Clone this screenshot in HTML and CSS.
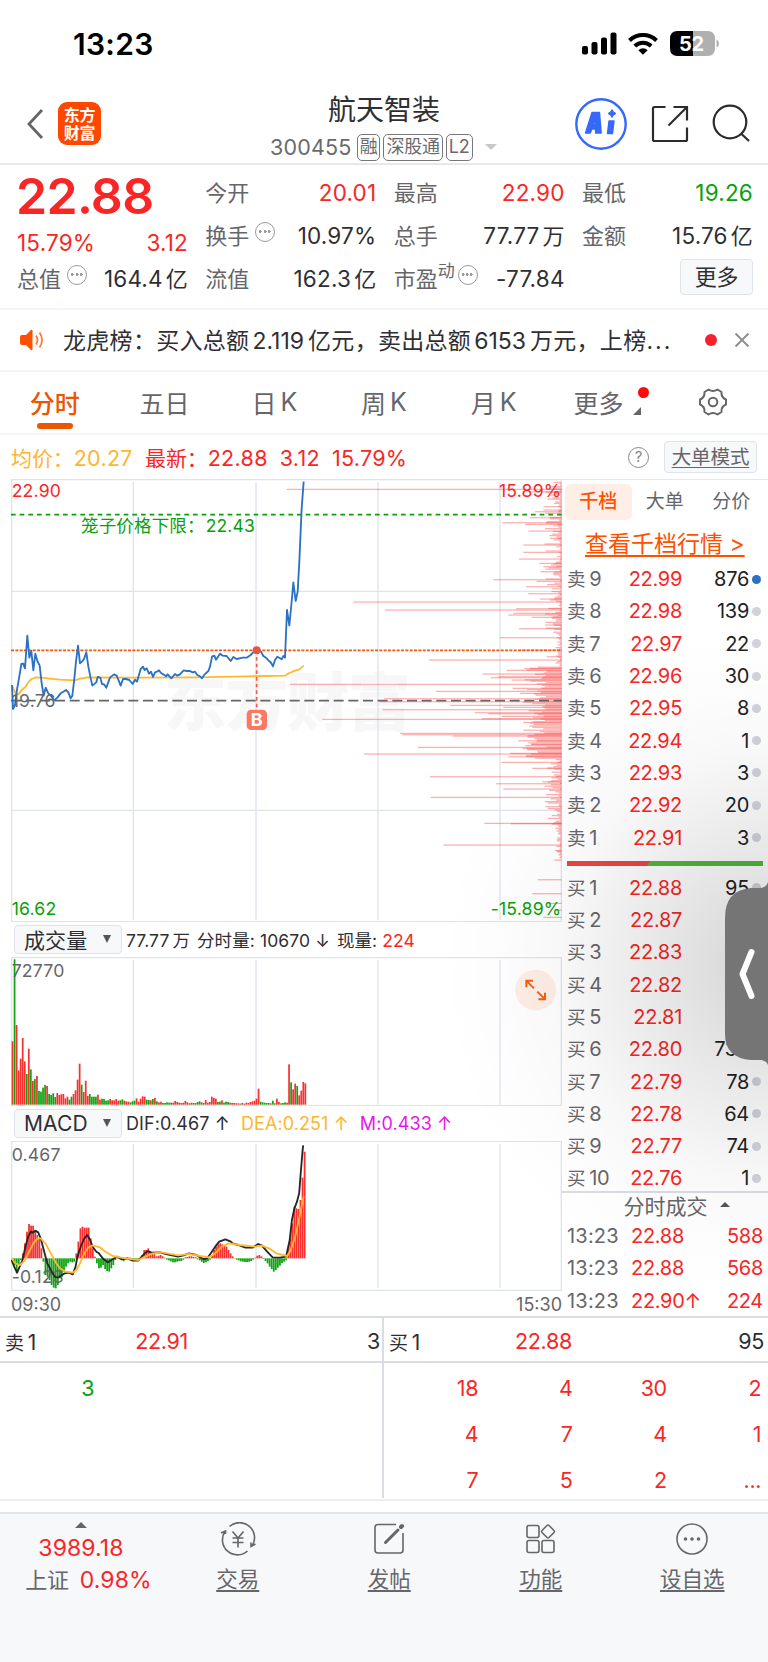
FILE: index.html
```html
<!DOCTYPE html>
<html lang="zh-CN">
<head>
    <meta charset="UTF-8">
    <meta name="viewport" content="width=device-width, initial-scale=1.0">
    <title>航天智装 300455</title>
    <link rel="stylesheet" href="styles.css">
</head>
<body>
    <div class="status-bar">
        <span class="clock">13:23</span>
        <svg class="status-icons" width="140" height="30" viewBox="580 29 140 30">
            <rect x="582" y="46" width="6" height="8.500" rx="2"/>
            <rect x="591.500" y="42" width="6" height="12.500" rx="2"/>
            <rect x="601" y="37.500" width="6" height="17" rx="2"/>
            <rect x="610.500" y="32.500" width="6" height="22" rx="2"/>
            <path d="M629.500 40.500a19.500 19.500 0 0 1 27 0" fill="none" stroke="#000" stroke-width="4"/>
            <path d="M634.800 46a12 12 0 0 1 16.400 0" fill="none" stroke="#000" stroke-width="4"/>
            <path d="M638.300 50.200q4.700-3.800 9.400 0l-4.700 4.600z"/>
            <path d="M677.500 31H693v25h-15.500q-7.500 0-7.500-8v-9q0-8 7.500-8z"/>
            <path d="M693 31h14.500q7.500 0 7.500 8v9q0 8-7.500 8H693z" fill="#b0b0b0"/>
            <path d="M716.500 39.500q2.500 1 2.500 4t-2.500 4z" fill="#b0b0b0"/>
            <text x="679" y="51" class="battery">52</text>
        </svg>
    </div>

    <header class="header">
        <div class="header-left">
            <svg width="18" height="32" viewBox="0 0 18 32" fill="none" stroke="#666" stroke-width="2.800"><path d="M16 2L3 16l13 14"/></svg>
            <div class="logo">东方<br>财富</div>
        </div>
        <div class="header-title">
            <h1>航天智装</h1>
            <div class="code">300455<span class="tag">融</span><span class="tag">深股通</span><span class="tag">L2</span><i class="down"></i></div>
        </div>
        <div class="header-icons">
            <svg width="52" height="52" viewBox="0 0 52 52">
                <circle cx="26" cy="26" r="24.700" fill="none" stroke="#3568fb" stroke-width="2.400"/>
                <path fill="#3568fb" stroke="#3568fb" stroke-width="1.400" stroke-linejoin="round" fill-rule="evenodd" d="M17 14.500h7.500l1.700 20.500h-5.500l-.2-4h-3.700l-1.500 4H10.500zM20.500 20.500l-2 6h2.300zM34 23h5l-1.500 12.500h-5z"/>
                <path fill="#3568fb" d="M37 11.500q1 3 4 4-3 1-4 4-1-3-4-4 3-1 4-4z" stroke="#3568fb" stroke-width="1"/>
            </svg>
            <svg width="38" height="38" viewBox="0 0 38 38" fill="none" stroke="#2c2c2e" stroke-width="2.200">
                <path d="M14.500 2H3.500Q2 2 2 3.500v31q0 1.500 1.500 1.500h31q1.500 0 1.500-1.500V22.500M22.500 2H36V15.500M36 2L17.500 20.500"/>
            </svg>
            <svg width="40" height="40" viewBox="0 0 40 40" fill="none" stroke="#2c2c2e" stroke-width="2.200">
                <circle cx="19" cy="18" r="16.300"/><path d="M30.500 30l7.500 7"/>
            </svg>
        </div>
    </header>

    <section class="summary">
        <div class="summary-col">
            <div class="big-price">22.88</div>
            <div class="pair change red"><b>15.79%</b><b>3.12</b></div>
            <div class="pair"><span>总值<i class="more-dot"></i></span><b>164.4<u>亿</u></b></div>
        </div>
        <div class="summary-col">
            <div class="pair"><span>今开</span><b class="red">20.01</b></div>
            <div class="pair"><span>换手<i class="more-dot"></i></span><b>10.97%</b></div>
            <div class="pair"><span>流值</span><b>162.3<u>亿</u></b></div>
        </div>
        <div class="summary-col">
            <div class="pair"><span>最高</span><b class="red">22.90</b></div>
            <div class="pair"><span>总手</span><b>77.77<u>万</u></b></div>
            <div class="pair"><span>市盈<sup>动</sup><i class="more-dot near"></i></span><b>-77.84</b></div>
        </div>
        <div class="summary-col">
            <div class="pair"><span>最低</span><b class="green">19.26</b></div>
            <div class="pair"><span>金额</span><b>15.76<u>亿</u></b></div>
            <div class="pair end"><button class="more-btn">更多</button></div>
        </div>
    </section>

    <div class="news">
        <svg width="26" height="28" viewBox="0 0 26 28" fill="#ff5000">
            <path d="M1 11q0-2 2-2h4l5-5q1.500-1 1.500 1v18q0 2-1.500 1l-5-5H3q-2 0-2-2z"/>
            <path d="M17 9.500q3 4.500 0 9M20.500 6.500q5 7.500 0 15" fill="none" stroke="#ff7a3c" stroke-width="1.800"/>
        </svg>
        <p>龙虎榜：买入总额<em>2.119</em>亿元，卖出总额<em>6153</em>万元，上榜<em>...</em></p>
        <i class="red-dot"></i>
        <svg width="16" height="16" viewBox="0 0 16 16" stroke="#8c8c8c" stroke-width="1.800"><path d="M1.500 1.500l13 13M14.500 1.500l-13 13"/></svg>
    </div>

    <nav class="tabs">
        <span class="active">分时</span>
        <span>五日</span>
        <span>日<em>K</em></span>
        <span>周<em>K</em></span>
        <span>月<em>K</em></span>
        <span class="tab-more">更多<i class="corner"></i><i class="badge"></i></span>
        <span>
            <svg width="30" height="30" viewBox="0 0 30 30" fill="none" stroke="#666" stroke-width="2">
                <path stroke-linejoin="round" d="M10.500 2.500Q15 5.500 19.500 2.500L23.500 5Q23 10.500 28 12.500V17.500Q23 19.500 23.500 25L19.500 27.500Q15 24.500 10.500 27.500L6.500 25Q7 19.500 2 17.500V12.500Q7 10.500 6.500 5Z"/>
                <circle cx="15" cy="15" r="4.300"/>
            </svg>
        </span>
    </nav>

    <main class="market">
        <div class="info-line">
            <span class="avg">均价：<em>20.27</em></span>
            <span class="last">最新：<em>22.88</em><em>3.12</em><em>15.79%</em></span>
            <i class="help">?</i>
            <button class="mode-btn">大单模式</button>
        </div>

        <div class="board">
            <div class="charts">
                <svg class="chart" id="priceChart" width="551" height="443" viewBox="33 12 1653 1329">
                    <text x="492" y="749" class="watermark">东方财富</text>
                    <g class="grid">
                        <path d="M35 12V1341M400 20V1334M768 20V1334M1134 20V1334M1500 20V1334M1684 12V1341"/>
                        <path d="M33 349H1685M33 1006H1685M33 14H1685M33 1340H1685"/>
                    </g>
                    <g id="depth"></g>
                    <path d="M33 677H1685" class="line-prev"/>
                    <path d="M33 119H1685" class="line-cage"/>
                    <path d="M33 526H1685" class="line-now"/>
                    <path class="avg-line" d="M36 632L45 652 55 658 65 645 77 635 85 622 95 612 108 607 125 608 150 611 180 614 225 616 240 611 262 607 400 608 600 607 700 605 855 602 868 594 885 587 898 583 911 572"/>
                    <path class="price-line" d="M36 630L39 702 45 690 50 650 57 610 64 567 70 566 75 580 82 482 88 548 94 528 100 586 106 536 112 558 119 572 125 625 131 662 137 638 145 655 155 665 163 676 172 668 182 655 190 650 198 645 205 652 212 670 217 662 222 620 228 560 234 512 240 565 246 560 252 552 259 532 265 575 271 605 277 632 289 622 293 606 301 608 306 627 312 628 319 638 330 608 342 598 350 602 362 632 369 612 378 612 388 615 398 627 405 614 411 620 422 582 429 575 434 585 440 580 447 596 453 590 459 606 465 592 471 590 477 586 483 594 490 598 498 604 503 598 514 610 525 597 532 602 540 598 551 586 560 588 570 588 578 592 585 590 592 600 600 604 606 610 614 598 625 588 630 575 636 545 643 542 648 554 660 536 668 542 680 543 692 558 700 546 710 552 728 548 740 548 752 540 762 530 770 526 783 530 790 543 800 550 807 558 812 562 819 574 825 555 832 545 840 550 845 553 850 543 855 548 861 405 868 452 874 390 880 322 887 378 893 350 898 260 905 100 911 20"/>
                    <path d="M770 526V702" class="line-buy"/>
                    <circle cx="770" cy="526" r="12" fill="#e8543f"/>
                    <rect x="740" y="704" width="61" height="61" rx="13" fill="#fb7866"/>
                    <text x="770" y="754" class="buy-mark">B</text>
                    <text x="35" y="66" class="label red-fill">22.90</text>
                    <text x="1684" y="66" class="label red-fill end-text">15.89%</text>
                    <text x="243" y="171" class="label green-fill cage">笼子价格下限：<tspan dx="3">22.43</tspan></text>
                    <text x="35" y="695" class="label grey-fill">19.76</text>
                    <text x="35" y="1320" class="label green-fill">16.62</text>
                    <text x="1684" y="1320" class="label green-fill end-text">-15.89%</text>
                </svg>

                <div class="sub-head">
                    <button class="select">成交量<i></i></button>
                    <span>77.77<u>万</u></span><span>分时量: 10670 ↓</span><span>现量: <em class="red">224</em></span>
                </div>
                <svg class="chart" id="volumeChart" width="551" height="149" viewBox="33 171 1653 447">
                    <g class="grid">
                        <path d="M35 171V618M400 179V614M768 179V614M1134 179V614M1500 179V614M1684 171V618"/>
                        <path d="M33 173H1685M33 617H1685"/>
                    </g>
                    <g id="volume"></g>
                    <text x="35" y="230" class="label grey-fill">72770</text>
                    <circle cx="1607" cy="270" r="61" fill="#feeee6"/>
                    <path d="M1579 262V242H1599M1581 244L1602 265M1635 278V298H1615M1633 296L1612 275" fill="none" stroke="#f4600f" stroke-width="6"/>
                </svg>

                <div class="sub-head macd-head">
                    <button class="select">MACD<i></i></button>
                    <span>DIF:0.467 ↑</span><span class="yellow">DEA:0.251 ↑</span><span class="magenta">M:0.433 ↑</span>
                </div>
                <svg class="chart" id="macdChart" width="551" height="150" viewBox="33 123 1653 450">
                    <g class="grid">
                        <path d="M35 123V573M400 131V565M768 131V565M1134 131V565M1500 131V565M1684 123V573"/>
                        <path d="M33 124H1685M33 571H1685"/>
                    </g>
                    <g id="macd"></g>
                    <text x="35" y="182" class="label grey-fill">0.467</text>
                    <text x="35" y="549" class="label grey-fill">-0.123</text>
                    <path id="dif" class="dif-line"/>
                    <path id="dea" class="avg-line"/>
                </svg>
                <div class="time-axis"><span>09:30</span><span>15:30</span></div>
            </div>

            <aside class="book">
                <div class="book-tabs"><span class="active">千档</span><span>大单</span><span>分价</span></div>
                <a class="book-link">查看千档行情 &gt;</a>
                <div class="levels" id="asks"></div>
                <div class="ratio"></div>
                <div class="levels buy" id="bids"></div>
                <div class="deals">
                    <div class="deals-title">分时成交<i></i></div>
                    <div class="deal"><span>13:23</span><b>22.88</b><b>588</b></div>
                    <div class="deal"><span>13:23</span><b>22.88</b><b>568</b></div>
                    <div class="deal"><span>13:23</span><b>22.90↑</b><b>224</b></div>
                </div>
            </aside>
        </div>

        <div class="glow"></div>
        <svg class="drawer" width="43" height="184" viewBox="0 0 43 184">
            <path fill="#757575" d="M43 0Q41 6 35 6H26Q0 8 0 36V152Q0 176 26 178H36Q42 179 43 183Z"/>
            <path d="M26.500 70L17.500 92l9 22" fill="none" stroke="#fff" stroke-width="6" stroke-linecap="round" stroke-linejoin="round"/>
        </svg>
    </main>

    <section class="queue">
        <div class="queue-side">
            <div class="queue-head"><span>卖<em>1</em></span><b>22.91</b><span>3</span></div>
            <div class="queue-grid"><span class="green">3</span></div>
        </div>
        <div class="queue-side">
            <div class="queue-head"><span>买<em>1</em></span><b>22.88</b><span>95</span></div>
            <div class="queue-grid red">
                <span>18</span><span>4</span><span>30</span><span>2</span>
                <span>4</span><span>7</span><span>4</span><span>1</span>
                <span>7</span><span>5</span><span>2</span><span>...</span>
            </div>
        </div>
    </section>

    <footer class="footer">
        <div class="index">
            <i></i>
            <b>3989.18</b>
            <div>上证<b>0.98%</b></div>
        </div>
        <div class="action">
            <svg width="36" height="34" viewBox="0 0 36 34" fill="none" stroke="#666" stroke-width="1.600">
                <path d="M9.500 4.500A15 15 0 0 1 32 24M1 11l4.500-2V12M5 9.500A15 15 0 0 0 27.500 29M35.500 22L31 24.500V20.500M12.500 9.500L18 16l5.500-6.500M12.500 16H23.500M12.500 20.500H23.500M18 16v9.500"/>
            </svg>
            <span>交易</span>
        </div>
        <div class="action">
            <svg width="32" height="34" viewBox="0 0 32 34" fill="none" stroke="#666" stroke-width="1.600">
                <path d="M23 2.500H5q-3 0-3 3V28q0 3 3 3H27q3 0 3-3V11"/>
                <path d="M12.500 20.500L25 8" stroke-width="3" stroke-linecap="round"/>
                <path d="M28 5l1-1" stroke-width="4" stroke-linecap="round"/>
            </svg>
            <span>发帖</span>
        </div>
        <div class="action">
            <svg width="32" height="34" viewBox="0 0 32 34" fill="none" stroke="#666" stroke-width="1.600">
                <rect x="2" y="3.500" width="12" height="12" rx="2"/>
                <rect x="2" y="18.500" width="12" height="12" rx="2"/>
                <rect x="17" y="18.500" width="12" height="12" rx="2"/>
                <path d="M22 3.500q1-1 2 0l5 5q1 1 0 2l-5 5q-1 1-2 0l-5-5q-1-1 0-2z"/>
            </svg>
            <span>功能</span>
        </div>
        <div class="action">
            <svg width="32" height="34" viewBox="0 0 32 34" fill="none" stroke="#666" stroke-width="1.600">
                <circle cx="16" cy="17" r="15"/>
                <g fill="#666" stroke="none"><circle cx="9.500" cy="17" r="1.800"/><circle cx="16" cy="17" r="1.800"/><circle cx="22.500" cy="17" r="1.800"/></g>
            </svg>
            <span>设自选</span>
        </div>
    </footer>

    <script src="script.js"></script>
</body>
</html>
```
FILE: styles.css
```css
* {
    margin: 0;
    padding: 0;
    box-sizing: border-box;
}

body {
    width: 768px;
    height: 1662px;
    overflow: hidden;
    background: #fff;
    color: #2f2f33;
    font-family: Inter, "Noto Sans CJK SC", sans-serif;
    font-size: 22px;
    letter-spacing: -0.3px;
}

b, em, i, u {
    font-weight: inherit;
    font-style: normal;
    text-decoration: none;
}

button {
    font: inherit;
    letter-spacing: inherit;
    color: inherit;
    background: #f6f8fa;
    border: 1px solid #dfe3ea;
    border-radius: 4px;
}

svg {
    display: block;
}

.red { color: #f92626; }
.green { color: #0aa00a; }
.yellow { color: #ffb52e; }
.magenta { color: #e815e8; }

/* Status bar */
.status-bar {
    height: 88px;
    padding: 0 48px 0 73px;
    display: flex;
    align-items: center;
    justify-content: space-between;
    color: #000;
}

.clock {
    font-size: 30px;
    font-weight: 600;
    letter-spacing: 0.3px;
    padding-bottom: 1px;
}

.battery {
    font-size: 20px;
    font-weight: 700;
    fill: #fff;
}

/* Header */
.header {
    height: 77px;
    display: grid;
    grid-template-columns: 200px 1fr 200px;
    border-bottom: 2px solid #e8e8ea;
}

.header-left {
    display: flex;
    align-items: center;
    gap: 14px;
    padding: 0 0 4px 26px;
}

.logo {
    width: 43px;
    height: 43px;
    border-radius: 9px;
    background: #ff4700;
    color: #fff;
    font-size: 16px;
    font-weight: 700;
    line-height: 18px;
    padding-top: 4px;
    text-align: center;
}

.header-title {
    padding-top: 2px;
    text-align: center;
}

.header-title h1 {
    font-size: 28px;
    font-weight: 400;
    line-height: 40px;
    letter-spacing: 0;
}

.code {
    display: flex;
    align-items: center;
    height: 32px;
    margin-top: 1px;
    padding-left: 70px;
    color: #6a6a6e;
    letter-spacing: 0.2px;
    font-size: 21.500px;
    gap: 3px;
    line-height: 24px;
}

.tag {
    height: 27px;
    border: 1.500px solid #77777b;
    border-radius: 5px;
    padding: 0 2px;
    font-size: 18px;
    line-height: 24px;
    letter-spacing: -0.2px;
}

.tag:first-child {
    margin-left: 2px;
}

.down {
    margin-left: 9px;
    border: 6px solid transparent;
    border-top-color: #c8c8c8;
    border-bottom: 0;
}

.header-icons {
    display: flex;
    align-items: center;
    gap: 24px;
    padding: 0 0 4px 7px;
}

.header-icons svg:last-child {
    margin-left: -2px;
}

/* Price summary */
.summary {
    height: 145px;
    padding: 0 15px 0 17px;
    display: grid;
    grid-template-columns: repeat(4, 171px);
    justify-content: space-between;
    border-bottom: 2px solid #f4f4f6;
}

.summary-col {
    display: flex;
    flex-direction: column;
    padding-top: 6px;
}

.pair {
    height: 43px;
    display: flex;
    align-items: center;
    justify-content: space-between;
    line-height: 30px;
}

.pair span {
    display: flex;
    align-items: center;
    color: #66666a;
    letter-spacing: 0;
}

.pair b {
    display: flex;
    align-items: center;
    font-size: 22.500px;
    letter-spacing: 0.2px;
}

.pair u {
    margin-left: 3px;
    font-size: 22px;
}

.pair.change {
    height: 41px;
}

.pair.change + .pair {
    margin-top: -6px;
}

.end {
    justify-content: flex-end;
}

.big-price {
    height: 51px;
    line-height: 51px;
    margin-left: -1px;
    color: #f92626;
    font-size: 50px;
    font-weight: 600;
    letter-spacing: -0.7px;
}

.pair sup {
    font-size: 17px;
    margin-top: -14px;
    line-height: 17px;
}

.more-dot {
    width: 20px;
    height: 20px;
    margin: -8px 0 0 6px;
    border: 1.500px solid #9a9a9e;
    border-radius: 50%;
    background: radial-gradient(circle, #9a9a9e 1.200px, transparent 1.600px) center / 4.500px 5px no-repeat, radial-gradient(circle, #9a9a9e 1.200px, transparent 1.600px) 2px center / 4.500px 5px no-repeat, radial-gradient(circle, #9a9a9e 1.200px, transparent 1.600px) 10.500px center / 4.500px 5px no-repeat;
}

.more-dot.near {
    margin-left: 3px;
}

.more-btn {
    width: 73px;
    height: 36px;
    margin-top: -3px;
    line-height: 32px;
}

/* News strip */
.news {
    height: 62px;
    padding: 0 18px 0 19px;
    display: flex;
    align-items: center;
    border-bottom: 2px solid #f4f4f6;
}

.news p {
    flex: 1;
    margin: -2px 0 0 18px;
    font-size: 23px;
    letter-spacing: 0.3px;
    white-space: nowrap;
}

.news em {
    margin: 0 4px 0 3px;
    letter-spacing: 0;
}

.news em:last-child {
    margin: 0;
    letter-spacing: 2px;
}

.red-dot {
    width: 12px;
    height: 12px;
    margin-right: 17px;
    border-radius: 50%;
    background: #f5222d;
}

/* Period tabs */
.tabs {
    height: 63px;
    display: grid;
    grid-template-columns: repeat(7, 1fr);
    border-bottom: 2px solid #f4f4f6;
    color: #66666a;
    font-size: 25px;
    letter-spacing: 0;
}

.tabs span {
    position: relative;
    display: flex;
    align-items: center;
    justify-content: center;
    padding-bottom: 2px;
}

.tabs em {
    margin-left: 4px;
}

.tabs .active {
    color: #ec5600;
    font-weight: 500;
}

.tabs .active::after {
    content: "";
    position: absolute;
    bottom: 4px;
    width: 36px;
    height: 6px;
    border-radius: 3px;
    background: #ec5600;
}

.tabs .tab-more {
    padding-right: 10px;
}

.corner {
    position: absolute;
    right: 17px;
    bottom: 18px;
    border-left: 8px solid transparent;
    border-bottom: 8px solid #66666a;
}

.badge {
    position: absolute;
    right: 9px;
    top: 15px;
    width: 11px;
    height: 11px;
    border-radius: 50%;
    background: #ff0a0a;
}

/* Quote area */
.market {
    position: relative;
    height: 883px;
    border-bottom: 2px solid #d9dde3;
}

.info-line {
    height: 44px;
    padding: 0 11px;
    display: flex;
    align-items: center;
    font-size: 21px;
    letter-spacing: -0.1px;
}

.info-line em {
    font-size: 21.500px;
    letter-spacing: 0.3px;
}

.info-line .avg {
    color: #ffb52e;
    width: 134px;
}

.info-line .last {
    flex: 1;
    color: #f92626;
}

.last em {
    margin-right: 12px;
}

.help {
    width: 21px;
    height: 21px;
    border: 1.500px solid #88888c;
    border-radius: 50%;
    color: #88888c;
    font-size: 15px;
    line-height: 18px;
    text-align: center;
    margin-right: 15px;
}

.mode-btn {
    width: 93px;
    height: 32px;
    font-size: 19.500px;
    color: #66666a;
    text-decoration: underline;
    text-underline-offset: 3px;
    line-height: 28px;
}

.board {
    display: flex;
    padding-left: 11px;
}

.charts {
    width: 551px;
}

.grid path {
    fill: none;
    stroke: #dfe3ec;
    stroke-width: 4;
}

.watermark {
    font-size: 188px;
    font-weight: 900;
    letter-spacing: -4px;
    fill: #f7f7f8;
}

.label {
    font-size: 53px;
    letter-spacing: 0.5px;
}

.cage {
    font-size: 52.500px;
}

.end-text { text-anchor: end; }
.red-fill { fill: #f92626; }
.green-fill { fill: #0aa00a; }
.grey-fill { fill: #66666a; }

.price-line, .avg-line, .dif-line {
    fill: none;
    stroke: #2b71c4;
    stroke-width: 5.500;
    stroke-linejoin: round;
}

.avg-line { stroke: #ffb92e; }
.dif-line { stroke: #262626; }

.line-prev { stroke: #66666a; stroke-width: 5; stroke-dasharray: 30 14; }
.line-cage { stroke: #0aa00a; stroke-width: 5; stroke-dasharray: 14 12; }
.line-now { stroke: #ef5a10; stroke-width: 5; stroke-dasharray: 9 4; }
.line-buy { stroke: #fb5c48; stroke-width: 5; stroke-dasharray: 11 9; }

.buy-mark {
    font-size: 54px;
    font-weight: 700;
    text-anchor: middle;
    fill: #fff;
}

.sub-head {
    height: 35px;
    padding: 0 0 1px 3px;
    display: flex;
    align-items: center;
    font-size: 17.500px;
    letter-spacing: 0.1px;
    white-space: pre;
}

.sub-head span {
    margin-right: 7px;
}

.sub-head u {
    margin-left: 3px;
}

.macd-head span {
    margin-right: 11px;
    font-size: 18px;
}

.select {
    width: 108px;
    height: 29px;
    margin-right: 4px;
    padding: 0 10px 0 9px;
    display: flex;
    align-items: center;
    justify-content: space-between;
    font-size: 21px;
}

.select i {
    border: 4.500px solid transparent;
    border-top: 8px solid #55555a;
    border-bottom: 0;
}

.time-axis {
    height: 27px;
    display: flex;
    justify-content: space-between;
    align-items: center;
    font-size: 18px;
    letter-spacing: 0;
    color: #66666a;
}

/* Order book */
.book {
    width: 206px;
    height: 838px;
    border-top: 1px solid #e4e7ee;
}

.book-tabs {
    height: 40px;
    padding: 4px 3px 0;
    display: grid;
    grid-template-columns: repeat(3, 66.500px);
    font-size: 19px;
    line-height: 35px;
    text-align: center;
    color: #66666a;
    letter-spacing: 0;
}

.book-tabs .active {
    color: #ff5000;
    font-weight: 500;
    background: #ffeee6;
    border-radius: 6px;
}

.book-link {
    display: block;
    height: 43px;
    padding-left: 23px;
    font-size: 23px;
    line-height: 48px;
    color: #ff5000;
    text-decoration: underline;
    text-underline-offset: 3px;
    text-decoration-thickness: 1.500px;
    letter-spacing: 0;
    white-space: nowrap;
}

.level {
    height: 32.300px;
    padding: 0 7px 0 5px;
    display: flex;
    align-items: center;
    font-size: 20px;
    line-height: 30px;
}

.level span {
    flex: 0 0 51px;
    font-size: 18.500px;
    color: #66666a;
}

.level em {
    margin-left: 4px;
    font-size: 20px;
}

.level b {
    width: 64px;
    color: #f92626;
    text-align: right;
}

.level strong {
    flex: 1;
    font-weight: 400;
    color: #222;
    text-align: right;
}

.level i {
    width: 9px;
    height: 9px;
    margin-left: 3px;
    border-radius: 50%;
    background: #d0d3da;
}

.level:first-child i.hot {
    background: #2b71c4;
}

.ratio {
    height: 5px;
    margin: 7px 5px 6px;
    background: linear-gradient(120deg, #e84646 41.500%, #56b441 41.800%);
}

.buy {
    height: 319px;
}

.deals {
    position: relative;
    border-top: 2px solid #d9dde3;
}

.deals-title {
    height: 27px;
    padding: 0 0 3px 23px;
    display: flex;
    align-items: center;
    justify-content: center;
    font-size: 21px;
    letter-spacing: 0;
    color: #66666a;
}

.deals-title i {
    margin-left: 12px;
    border: 5px solid transparent;
    border-bottom-color: #55555a;
    border-top: 0;
}

.deal {
    height: 32.500px;
    padding: 0 5px;
    display: flex;
    align-items: center;
    font-size: 20px;
    color: #f92626;
}

.deal span {
    width: 64px;
    color: #66666a;
    letter-spacing: 0.2px;
}

.deal b:last-child {
    margin-left: auto;
}

.glow {
    position: absolute;
    right: 0;
    top: 80px;
    width: 340px;
    height: 803px;
    background: radial-gradient(ellipse 330px 340px at 100% 450px, rgba(0, 0, 0, 0.170), rgba(0, 0, 0, 0.090) 35%, rgba(0, 0, 0, 0.028) 64%, rgba(0, 0, 0, 0.008) 85%, transparent);
}

.drawer {
    position: absolute;
    right: 0;
    top: 447px;
}

/* Level 1 queues */
.queue {
    height: 183px;
    display: grid;
    grid-template-columns: 1fr 1fr;
    border-bottom: 2px solid #eceef1;
}

.queue-side {
    height: 180px;
    overflow: hidden;
}

.queue-side + .queue-side {
    border-left: 2px solid #d9dde3;
    margin-left: -2px;
}

.queue-head {
    height: 45px;
    padding: 3px 4px 0 5px;
    display: flex;
    align-items: center;
    font-size: 21.500px;
    border-bottom: 2px solid #d9dde3;
}

.queue-head span:first-child {
    width: 60px;
    font-size: 19px;
}

.queue-head em {
    margin-left: 4px;
    font-size: 21px;
}

.queue-head b {
    width: 123px;
    color: #f92626;
    text-align: right;
}

.queue-head span:last-child {
    margin-left: auto;
}

.queue-grid {
    display: grid;
    grid-template-columns: repeat(4, 94.300px);
    grid-auto-rows: 46px;
    align-items: center;
    padding-top: 2px;
    text-align: right;
    font-size: 21.500px;
}

/* Footer */
.footer {
    height: 150px;
    margin-top: 11px;
    padding-top: 8px;
    display: grid;
    grid-template-columns: 162px repeat(4, 151.500px);
    background: #f6f8fa;
    border-top: 2px solid #e2e4e8;
    color: #66666a;
}

.index {
    display: flex;
    flex-direction: column;
    align-items: center;
    line-height: 32px;
}

.index i {
    border: 6px solid transparent;
    border-bottom: 6px solid #66666a;
    border-top: 0;
    margin-bottom: 4px;
}

.index b {
    color: #f92626;
    font-size: 23px;
    letter-spacing: 0.1px;
}

.index div {
    display: flex;
    gap: 11px;
    padding-left: 15px;
}

.action {
    display: flex;
    flex-direction: column;
    align-items: center;
    font-size: 21.500px;
    letter-spacing: 0;
}

.action span {
    margin-top: 7px;
    line-height: 32px;
    text-decoration: underline;
    text-underline-offset: 3px;
}
```
FILE: script.js
```js
// Order book: price, volume
const asks = [["22.99", "876"], ["22.98", "139"], ["22.97", "22"], ["22.96", "30"], ["22.95", "8"], ["22.94", "1"], ["22.93", "3"], ["22.92", "20"], ["22.91", "3"]];
const bids = [["22.88", "95"], ["22.87", ""], ["22.83", ""], ["22.82", ""], ["22.81", ""], ["22.80", "736"], ["22.79", "78"], ["22.78", "64"], ["22.77", "74"], ["22.76", "1"]];

function level(name, n, row, hot) {
    return `<div class="level"><span>${name}<em>${n}</em></span><b>${row[0]}</b><strong>${row[1]}</strong><i class="${hot ? "hot" : ""}"></i></div>`;
}

document.getElementById("asks").innerHTML = asks.map((row, i) => level("卖", 9 - i, row, i === 0)).join("");
document.getElementById("bids").innerHTML = bids.map((row, i) => level("买", i + 1, row, false)).join("");

const RED = "#f93030";
const GREEN = "#0fa50f";

function rect(x, y, w, h, fill) {
    return `<rect x="${x}" y="${y}" width="${w}" height="${h}" fill="${fill}"/>`;
}

// Volume per minute, r = up, g = down
const volume = "r190 g436 r239 r103 r138 r200 r130 g92 r168 g106 r71 g77 r86 g41 g39 g51 g59 r56 g32 g29 g34 g23 r35 r29 r31 r32 r19 r24 g15 g24 r32 r43 r75 r123 g60 r38 r72 r26 g32 g24 g24 g24 r30 r15 g18 g17 g12 g13 r17 r13 r13 r17 r12 g13 g16 r12 r10 r9 g7 g10 g12 r19 r9 r18 r25 r24 g15 g14 r13 g17 r20 g10 r7 r9 g5 g5 g7 g6 g6 r6 r11 r8 g6 r5 r6 r11 r7 g4 r6 g5 r5 g8 g10 r7 g5 r14 r6 r8 r24 r20 r18 g8 g9 r13 g6 g9 g8 r6 r5 r5 r4 r4 g3 r5 r3 r6 r5 r8 r10 r12 r18 r48 g9 g7 g6 g5 g5 r4 g12 g4 r18 r8 g4 g5 g7 r6 r121 g67 r46 r63 g56 r28 r42 r68 r64".split(" ");
document.getElementById("volume").innerHTML = volume.map((v, i) => {
    const h = Number(v.slice(1));
    return rect(35 + 6.1 * i, 614 - h, 5.2, h, v[0] === "r" ? RED : GREEN);
}).join("");

// MACD histogram
const macd = [-4, -20, -45, -20, -5, 15, 45, 80, 103, 98, 98, 80, 70, 60, 30, -10, -50, -55, -65, -80, -88, -90, -80, -60, -55, -40, -25, -15, -10, -12, -10, 15, 50, 90, 95, 92, 92, 92, 60, 30, 5, -15, -30, -28, -20, -32, -38, -40, -30, -20, -5, 2, 4, -3, -9, -4, 2, 2, -2, -3, -5, -6, -4, 10, 25, 25, 30, 22, 18, 12, 6, 8, 10, 6, 2, -4, -6, -9, -12, -12, -10, -8, -8, -4, 3, 4, 6, 6, 4, 3, -3, -6, -10, -14, -12, -8, -4, 10, 25, 35, 42, 45, 42, 38, 35, 25, 15, 6, 1, -4, -6, -9, -10, -11, -11, -10, -8, -4, 2, 8, 10, 6, -2, -8, -15, -25, -32, -40, -35, -28, -22, -14, -10, -6, 30, 60, 105, 155, 150, 148, 175, 242, 320];
document.getElementById("macd").innerHTML = macd.map((v, i) =>
    rect(35 + 6.17 * i, v > 0 ? 475 - v : 475, 5.4, Math.abs(v), v > 0 ? RED : GREEN)
).join("");

const dif = [32,480,40,502,47,518,52,505,62,480,70,440,78,408,85,395,90,398,97,392,105,397,112,415,118,440,130,490,145,520,152,532,162,532,178,520,190,518,200,523,208,500,213,470,222,440,232,415,240,405,248,420,255,440,265,455,272,460,285,478,297,487,310,478,322,470,335,478,350,475,365,482,380,482,390,470,400,458,407,453,415,458,440,457,460,463,490,470,505,466,520,460,540,465,550,472,560,477,570,475,580,460,592,440,603,425,620,418,635,425,640,430,655,435,675,443,695,443,710,432,720,436,735,455,750,472,770,473,787,470,797,420,803,360,810,325,817,305,823,280,828,210,833,145,834,136];
const dea = [32,475,42,490,55,495,68,482,80,455,92,430,103,415,112,415,125,430,140,460,155,490,165,505,180,515,200,518,210,510,220,490,232,460,243,442,255,436,275,442,290,455,310,468,330,472,350,476,380,480,400,470,420,460,445,457,490,466,520,462,550,468,575,472,590,462,610,440,630,430,660,435,700,440,720,437,740,445,760,460,790,468,800,450,812,410,824,350,835,290];

function line(points) {
    return "M" + points.map((p, i) => i % 2 ? p : (p * 1.0905).toFixed(1)).join(" ");
}

document.getElementById("dif").setAttribute("d", line(dif));
document.getElementById("dea").setAttribute("d", line(dea));

// Volume by price, drawn from the right edge: y, length
const depth = [[43,825],[50,90],[95,55],[105,55],[110,80],[128,95],[143,178],[148,110],[168,100],[190,35],[210,115],[232,115],[252,128],[265,67],[275,55],[290,63],[314,205],[319,75],[335,107],[356,100],[372,65],[381,625],[401,137],[405,530],[415,145],[420,160],[427,90],[450,50],[461,128],[488,185],[525,125],[545,45],[555,398],[580,95],[586,165],[597,237],[605,190],[608,213],[615,150],[628,815],[640,147],[649,377],[655,125],[671,533],[680,547],[691,335],[697,175],[704,538],[713,261],[716,220],[724,180],[731,240],[733,718],[742,115],[775,485],[779,478],[783,327],[797,130],[808,90],[817,431],[821,105],[835,155],[837,593],[845,160],[862,180],[880,88],[905,395],[920,58],[926,197],[942,175],[967,393],[995,48],[1045,232],[1046,152],[1110,355],[1128,15],[1155,22],[1214,72],[1256,88],[1285,35],[1305,20],[1327,55]];
for (let y = 22; y < 1150; y += 4.2) {
    const busy = y > 575 && y < 850;
    const wave = Math.abs(Math.sin(y * 12.9898) * 43758.5453) % 1;
    const quiet = y > 1050 || (y > 490 && y < 575);
    depth.push([y, busy ? 45 + wave * 75 : 4 + wave * wave * (quiet ? 16 : 48)]);
}
document.getElementById("depth").innerHTML = depth.map(([y, w]) =>
    rect(1685 - w, y - 1.7, w, 3.8, "rgba(248, 50, 50, 0.38)")
).join("");
```
